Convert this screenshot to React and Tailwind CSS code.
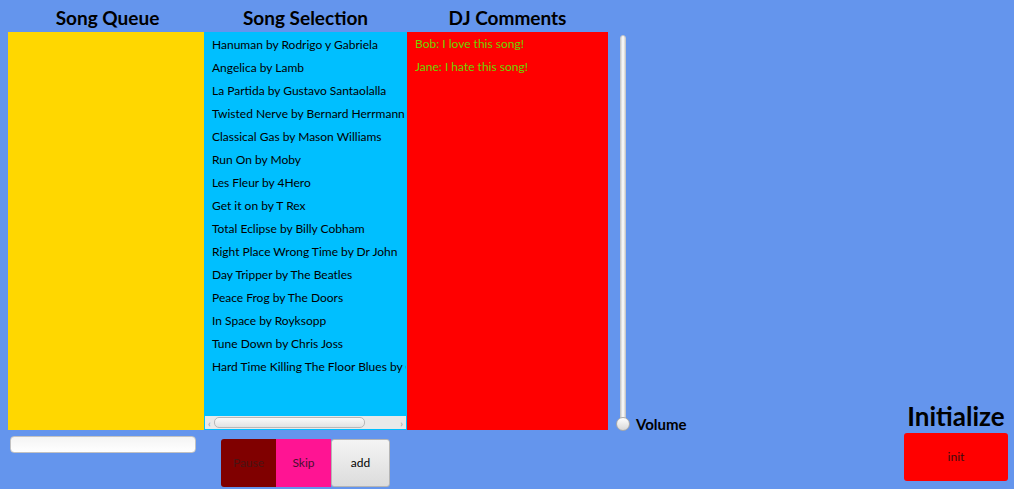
import React from 'react';

const songs = [
  'Hanuman by Rodrigo y Gabriela',
  'Angelica by Lamb',
  'La Partida by Gustavo Santaolalla',
  'Twisted Nerve by Bernard Herrmann',
  'Classical Gas by Mason Williams',
  'Run On by Moby',
  'Les Fleur by 4Hero',
  'Get it on by T Rex',
  'Total Eclipse by Billy Cobham',
  'Right Place Wrong Time by Dr John',
  'Day Tripper by The Beatles',
  'Peace Frog by The Doors',
  'In Space by Royksopp',
  'Tune Down by Chris Joss',
  'Hard Time Killing The Floor Blues by Chris Thomas King',
];

const comments = ['Bob: I love this song!', 'Jane: I hate this song!'];

function Title({ children, className = '' }) {
  return (
    <div className={`h-8 flex items-center justify-center pt-[4px] text-[19px] font-bold text-black ${className}`}>
      {children}
    </div>
  );
}

function ScrollBar() {
  return (
    <div className="h-[13px] bg-[#e9e9e9] flex items-center px-[3px] gap-[3px] text-[#9a9a9a]">
      <span className="text-[10px] leading-none">‹</span>
      <div className="w-[151px] h-[11px] rounded-[5px] border border-[#b8b8b8] bg-gradient-to-b from-[#fafafa] to-[#e2e2e2]" />
      <div className="flex-1" />
      <span className="text-[10px] leading-none">›</span>
    </div>
  );
}

function VolumeSlider() {
  return (
    <div className="flex flex-col items-center w-[14px] h-full pt-[3px]">
      <div className="w-[6px] flex-1 rounded-t-[3px] bg-gradient-to-r from-[#d6d6d6] via-white to-[#d6d6d6] border border-[#c9c9c9]" />
      <div className="w-[14px] h-[14px] -mt-[4px] rounded-full border border-[#a9a9a9] bg-gradient-to-b from-white to-[#d8d8d8]" />
    </div>
  );
}

export default function App() {
  return (
    <div
      className="w-[1014px] h-[489px] bg-[#6495ED] flex overflow-hidden"
      style={{ fontFamily: "'Lato', 'Noto Sans', sans-serif" }}
    >
      {/* queue column */}
      <div className="ml-2 w-[196px] flex flex-col">
        <Title className="pl-[3px]">Song Queue</Title>
        <div className="h-[398px] bg-[#FFD700]" />
        <div className="mt-[6px] ml-[2px] w-[186px] h-[17px] rounded-[4px] border border-[#c2c2c2] bg-gradient-to-b from-[#f4f4f4] to-white" />
      </div>

      {/* selection column */}
      <div className="w-[203px] flex flex-col">
        <Title>Song Selection</Title>
        <div className="h-[398px] bg-[#00BFFF] border border-[#00BFFF] flex flex-col">
          <div className="flex-1 overflow-hidden pl-[7px]">
            {songs.map((s) => (
              <div key={s} className="h-[23px] text-[12px] leading-[23px] text-black whitespace-nowrap">
                {s}
              </div>
            ))}
          </div>
          <ScrollBar />
        </div>
        <div className="mt-[9px] ml-[17px] flex h-[48px]">
          <button className="w-[55px] rounded-l-[3px] bg-[#800000] text-[12px] text-[#4a1414]">Pause</button>
          <button className="w-[55px] bg-[#FF1493] text-[12px] text-[#4a1030]">Skip</button>
          <button className="w-[59px] rounded-[3px] border border-[#b5b5b5] bg-gradient-to-b from-[#f4f4f4] to-[#dcdcdc] text-[12px] text-black">
            add
          </button>
        </div>
      </div>

      {/* comments column */}
      <div className="w-[201px] flex flex-col">
        <Title>DJ Comments</Title>
        <div className="h-[398px] bg-[#FF0000] pl-[8px]">
          {comments.map((c) => (
            <div key={c} className="h-[23px] text-[12px] leading-[23px] text-[#6cd400] whitespace-nowrap">
              {c}
            </div>
          ))}
        </div>
      </div>

      {/* volume */}
      <div className="ml-[8px] flex flex-col pt-8">
        <div className="flex items-end h-[399px]">
          <VolumeSlider />
          <span className="ml-[6px] -mb-[1px] text-[15px] font-bold text-black leading-none">Volume</span>
        </div>
      </div>

      <div className="flex-1" />

      {/* init */}
      <div className="mr-[6px] flex flex-col justify-end items-center pb-[8px]">
        <div className="text-[26px] font-bold text-black leading-none mb-[4px]">Initialize</div>
        <button className="w-[104px] h-[48px] rounded-[3px] bg-[#FF0000] text-[12px] text-[#3a0f0f]">init</button>
      </div>
    </div>
  );
}
